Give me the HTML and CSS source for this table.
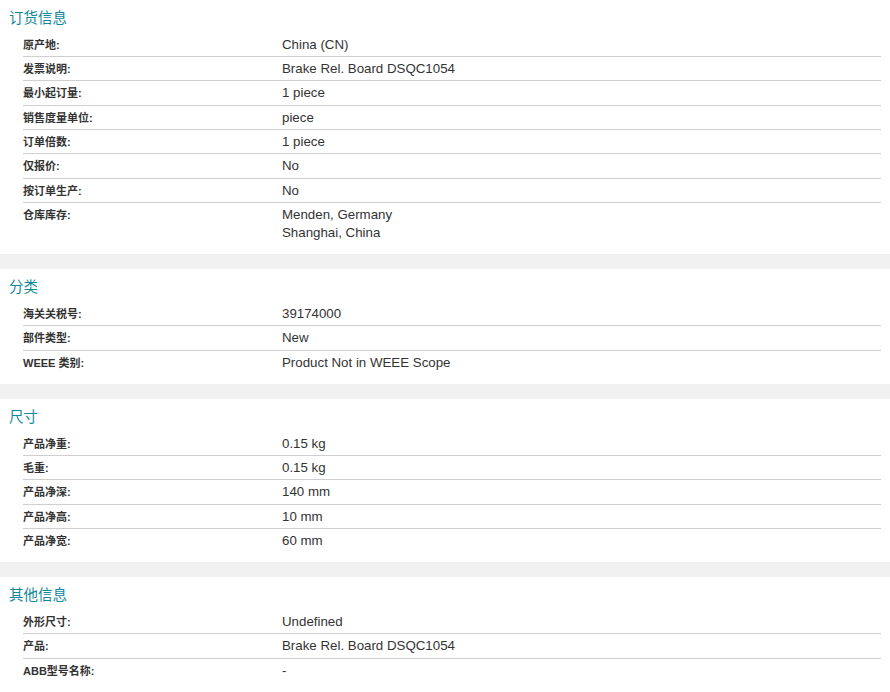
FILE: index.html
```html
<!DOCTYPE html>
<html lang="zh-CN">
<head>
    <meta charset="utf-8">
    <title>产品信息</title>
    <link rel="stylesheet" href="styles.css">
</head>
<body>

    <div class="section">
        <p class="section-title">订货信息</p>
        <div class="attr-list">
            <div class="attr-row"><span class="attr-label">原产地:</span><span class="attr-value">China (CN)</span></div>
            <div class="attr-row"><span class="attr-label">发票说明:</span><span class="attr-value">Brake Rel. Board DSQC1054</span></div>
            <div class="attr-row"><span class="attr-label">最小起订量:</span><span class="attr-value">1 piece</span></div>
            <div class="attr-row"><span class="attr-label">销售度量单位:</span><span class="attr-value">piece</span></div>
            <div class="attr-row"><span class="attr-label">订单倍数:</span><span class="attr-value">1 piece</span></div>
            <div class="attr-row"><span class="attr-label">仅报价:</span><span class="attr-value">No</span></div>
            <div class="attr-row"><span class="attr-label">按订单生产:</span><span class="attr-value">No</span></div>
            <div class="attr-row"><span class="attr-label">仓库库存:</span><span class="attr-value">Menden, Germany<br>Shanghai, China</span></div>
        </div>
    </div>

    <div class="band"></div>

    <div class="section">
        <p class="section-title">分类</p>
        <div class="attr-list">
            <div class="attr-row"><span class="attr-label">海关关税号:</span><span class="attr-value">39174000</span></div>
            <div class="attr-row"><span class="attr-label">部件类型:</span><span class="attr-value">New</span></div>
            <div class="attr-row"><span class="attr-label">WEEE 类别:</span><span class="attr-value">Product Not in WEEE Scope</span></div>
        </div>
    </div>

    <div class="band"></div>

    <div class="section">
        <p class="section-title">尺寸</p>
        <div class="attr-list">
            <div class="attr-row"><span class="attr-label">产品净重:</span><span class="attr-value">0.15 kg</span></div>
            <div class="attr-row"><span class="attr-label">毛重:</span><span class="attr-value">0.15 kg</span></div>
            <div class="attr-row"><span class="attr-label">产品净深:</span><span class="attr-value">140 mm</span></div>
            <div class="attr-row"><span class="attr-label">产品净高:</span><span class="attr-value">10 mm</span></div>
            <div class="attr-row"><span class="attr-label">产品净宽:</span><span class="attr-value">60 mm</span></div>
        </div>
    </div>

    <div class="band"></div>

    <div class="section">
        <p class="section-title">其他信息</p>
        <div class="attr-list">
            <div class="attr-row"><span class="attr-label">外形尺寸:</span><span class="attr-value">Undefined</span></div>
            <div class="attr-row"><span class="attr-label">产品:</span><span class="attr-value">Brake Rel. Board DSQC1054</span></div>
            <div class="attr-row"><span class="attr-label">ABB型号名称:</span><span class="attr-value">-</span></div>
        </div>
    </div>

</body>
</html>
```

FILE: styles.css
```css
p{
    margin: 0;
}
body{
    margin: 0;
    background-color: #ffffff;
    color: #333333;
    font-family: "Liberation Sans", Arial, "Noto Sans CJK SC", sans-serif;
}
.band{
    height: 15px;
    background-color: #f1f1f1;
}
.section{
    padding: 0 9px 10px 9px;
}
.section-title{
    font-family: "Noto Sans CJK SC", sans-serif;
    font-size: 14.5px;
    line-height: 20px;
    height: 20px;
    color: #11889a;
    padding-top: 7px;
    margin-bottom: 5.7px;
}
.attr-list{
    margin-left: 14px;
}
.attr-row{
    display: grid;
    grid-template-columns: 259px 1fr;
    align-items: baseline;
    padding-top: 3px;
    padding-bottom: 2.33px;
    border-bottom: 1px solid #cfcfcf;
}
.attr-row:last-child{
    border-bottom: none;
}
.attr-label{
    font-size: 11px;
    line-height: 12px;
    font-weight: bold;
    color: #333333;
}
.attr-value{
    font-size: 13.3px;
    line-height: 18px;
    color: #333333;
}
```
